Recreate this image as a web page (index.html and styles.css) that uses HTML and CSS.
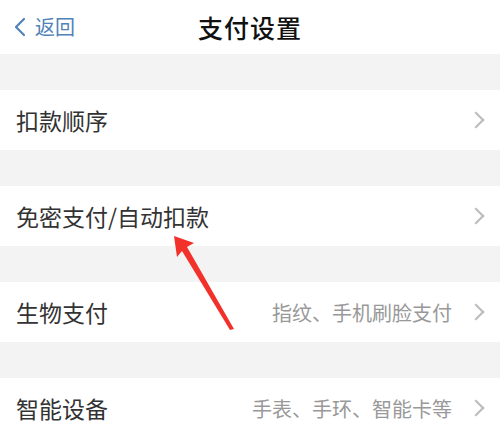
FILE: index.html
```html
<!DOCTYPE html>
<html lang="zh-CN">
<head>
  <meta charset="UTF-8" />
  <title>支付设置</title>
  <link rel="stylesheet" href="styles.css">
</head>
<body>
  <div class="page">
    <div class="header">
      <a class="back">
        <svg width="12" height="20" viewBox="0 0 12 20"><path d="M10 2 L2 10 L10 18" fill="none" stroke="#4f82b8" stroke-width="2.2" stroke-linecap="round" stroke-linejoin="round"/></svg>
        <span>返回</span>
      </a>
      <div class="title">支付设置</div>
    </div>

    <div class="gap"></div>
    <div class="row">
      <span class="label">扣款顺序</span>
      <span class="chev"></span>
    </div>

    <div class="gap"></div>
    <div class="row">
      <span class="label">免密支付/自动扣款</span>
      <span class="chev"></span>
    </div>

    <div class="gap"></div>
    <div class="row">
      <span class="label">生物支付</span>
      <span class="value">指纹、手机刷脸支付</span>
      <span class="chev"></span>
    </div>

    <div class="gap"></div>
    <div class="row">
      <span class="label">智能设备</span>
      <span class="value">手表、手环、智能卡等</span>
      <span class="chev"></span>
    </div>

    <svg class="arrow" width="500" height="438" viewBox="0 0 500 438">
      <polygon points="174,236 194,243 187,247 234,329 230,330 182,251 177,257" fill="#f2322a"/>
    </svg>
  </div>
</body>
</html>
```

FILE: styles.css
```css
body {
  margin: 0;
  font-family: "Noto Sans CJK SC", "Noto Sans", sans-serif;
  background: #f3f3f3;
}
.page {
  position: relative;
  width: 500px;
  height: 438px;
  overflow: hidden;
}
.header {
  height: 54px;
  background: #fff;
  display: flex;
  align-items: center;
  justify-content: center;
  position: relative;
}
.back {
  position: absolute;
  left: 14px;
  top: 12px;
  display: flex;
  align-items: center;
  gap: 9px;
  color: #4f82b8;
  font-size: 20px;
}
.title {
  font-size: 25px;
  color: #111;
  font-weight: 500;
  letter-spacing: 1px;
}
.gap {
  height: 36px;
}
.row {
  height: 60px;
  background: #fff;
  display: flex;
  align-items: center;
  padding: 0 16px;
}
.label {
  font-size: 23px;
  color: #333;
  flex: 1;
}
.value {
  font-size: 20px;
  color: #999;
  margin-right: 18px;
}
.chev {
  width: 10px;
  height: 10px;
  border-top: 2px solid #bbb;
  border-right: 2px solid #bbb;
  transform: rotate(45deg);
  margin-right: 2px;
}
.arrow {
  position: absolute;
  left: 0;
  top: 0;
}
```
